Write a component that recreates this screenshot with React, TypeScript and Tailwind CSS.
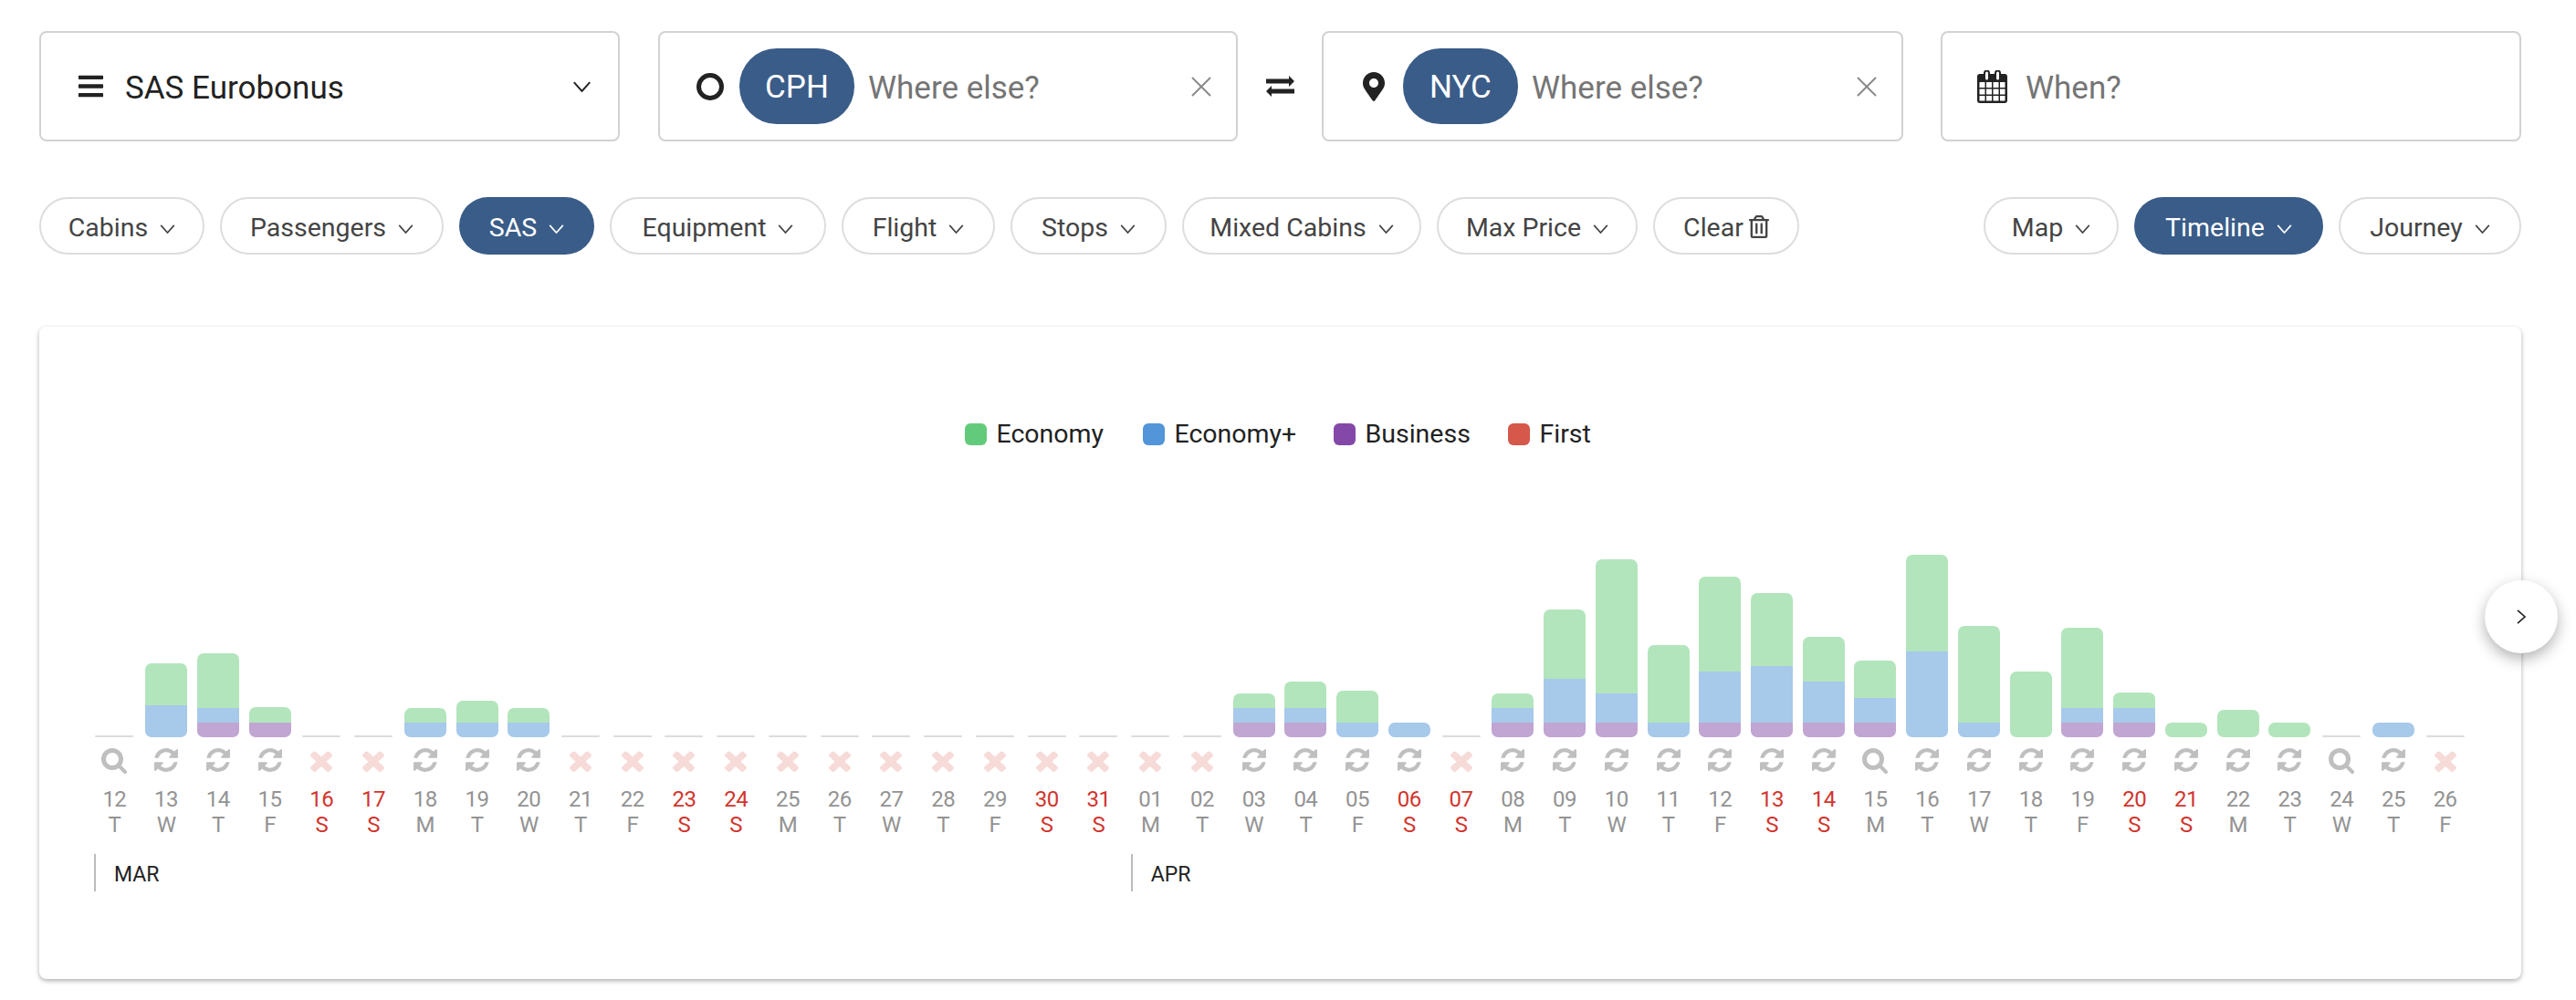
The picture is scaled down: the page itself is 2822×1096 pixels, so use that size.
import { FaBars, FaMapMarkerAlt, FaRegTrashAlt } from "react-icons/fa";

const Chevron = ({ className = "" }: { className?: string }) => (
  <svg viewBox="0 0 18 11" className={"w-[17px] h-[10px] shrink-0 " + className} fill="none" stroke="currentColor" strokeWidth="1.8">
    <polyline points="1,1 9,10 17,1" />
  </svg>
);

const Cross = () => (
  <svg viewBox="0 0 22 22" className="w-[22px] h-[22px] text-[#8a8a8a] shrink-0" fill="none" stroke="currentColor" strokeWidth="2">
    <line x1="1" y1="1" x2="21" y2="21" />
    <line x1="21" y1="1" x2="1" y2="21" />
  </svg>
);

const Swap = () => (
  <svg viewBox="0 0 31 23" className="w-[31px] h-[23px] text-[#222]" fill="currentColor">
    <path d="M0 3.5h25V0l6 6-6 6V8.5H0z" />
    <path d="M31 14.5H6V11l-6 6 6 6v-3.5h25z" />
  </svg>
);

const CalendarIcon = () => (
  <svg viewBox="0 0 33 36" className="w-[33px] h-[36px] text-[#222]" fill="currentColor">
    <path
      fillRule="evenodd"
      d="M3 4h4V3a3.5 3.5 0 0 1 7 0v1h5V3a3.5 3.5 0 0 1 7 0v1h4a3 3 0 0 1 3 3v26a3 3 0 0 1-3 3H3a3 3 0 0 1-3-3V7a3 3 0 0 1 3-3zM9 3v6a1.5 1.5 0 0 0 3 0V3a1.5 1.5 0 0 0-3 0zm12 0v6a1.5 1.5 0 0 0 3 0V3a1.5 1.5 0 0 0-3 0zM2.500 13v6h6v-6zm7.500 0v6h6v-6zm7.500 0v6h6v-6zm7.500 0v6h5.500v-6zM2.500 20.500v6h6v-6zm7.500 0v6h6v-6zm7.500 0v6h6v-6zm7.500 0v6h5.500v-6zM2.500 28v5.500h6V28zm7.500 0v5.500h6V28zm7.500 0v5.500h6V28zm7.500 0v5.500h5.500V28z"
    />
  </svg>
);

const SyncIcon = () => (
  <svg viewBox="0 128 1536 1536" className="w-[26px] h-[26px] text-[#bfbfbf]" fill="currentColor">
    <path d="M1511 1056q0 5-1 7-64 268-268 434.5t-478 166.5q-146 0-282.5-55t-243.5-157l-129 129q-19 19-45 19t-45-19-19-45v-448q0-26 19-45t45-19h448q26 0 45 19t19 45-19 45l-137 137q71 66 161 102t187 36q134 0 250-65t186-179q11-17 53-117 8-23 30-23h192q13 0 22.5 9.5t9.5 22.5zm25-800v448q0 26-19 45t-45 19h-448q-26 0-45-19t-19-45 19-45l138-138q-148-137-349-137-134 0-250 65t-186 179q-11 17-53 117-8 23-30 23h-199q-13 0-22.5-9.5t-9.5-22.5v-7q65-268 270-434.5t480-166.5q146 0 284 55.5t245 156.5l130-129q19-19 45-19t45 19 19 45z" />
  </svg>
);

const CrossIcon = () => (
  <svg viewBox="302 238 1188 1316" className="w-[24px] h-[25px] mt-[1px] text-[#f7dbd8]" fill="currentColor" preserveAspectRatio="none">
    <path d="M1490 1322q0 40-28 68l-136 136q-28 28-68 28t-68-28l-294-294-294 294q-28 28-68 28t-68-28l-136-136q-28-28-28-68t28-68l294-294-294-294q-28-28-28-68t28-68l136-136q28-28 68-28t68 28l294 294 294-294q28-28 68-28t68 28l136 136q28 28 28 68t-28 68l-294 294 294 294q28 28 28 68z" />
  </svg>
);

const SearchIcon = () => (
  <svg viewBox="0 0 28 28" className="w-[28px] h-[28px] shrink-0 text-[#bfbfbf]" fill="none" stroke="currentColor" strokeWidth="5">
    <circle cx="12" cy="12" r="9.5" />
    <line x1="18.500" y1="18.500" x2="26" y2="26" strokeLinecap="round" strokeWidth="4" />
  </svg>
);

const Chip = ({ label, width, active }: { label: string; width: string; active?: boolean }) => (
  <div
    className={
      "h-[63px] rounded-full flex items-center justify-center gap-[13px] text-[28.5px] " +
      width +
      (active ? " bg-[#3a5c88] text-white" : " border-2 border-[#dddde0] text-[#444]")
    }
  >
    <span className="mt-[6px]">{label}</span>
    <Chevron className="mt-[6px]" />
  </div>
);

const Airport = ({ code, icon, width }: { code: string; icon: React.ReactNode; width: string }) => (
  <div className={"h-[121px] border-2 border-[#d2d2d2] rounded-lg flex items-center pl-[39px] pr-[27px] " + width}>
    <div className="w-[31px] flex justify-center">{icon}</div>
    <div className="ml-[17px] w-[126px] h-[83px] rounded-[41px] bg-[#3a5c88] text-white text-[35px] flex items-center justify-center">
      <span className="mt-[3px]">{code}</span>
    </div>
    <div className="ml-[15px] mt-[6px] flex-1 text-[35px] text-[#757575]">Where else?</div>
    <Cross />
  </div>
);

type Day = {
  d: string;
  w: string;
  s: "search" | "sync" | "x";
  g?: number;
  b?: number;
  p?: number;
  red?: boolean;
};

const days: Day[] = [
  { d: "12", w: "T", s: "search" },
  { d: "13", w: "W", s: "sync", g: 46, b: 35 },
  { d: "14", w: "T", s: "sync", g: 60, b: 16, p: 16 },
  { d: "15", w: "F", s: "sync", g: 17, p: 16 },
  { d: "16", w: "S", s: "x", red: true },
  { d: "17", w: "S", s: "x", red: true },
  { d: "18", w: "M", s: "sync", g: 16, b: 16 },
  { d: "19", w: "T", s: "sync", g: 24, b: 16 },
  { d: "20", w: "W", s: "sync", g: 16, b: 16 },
  { d: "21", w: "T", s: "x" },
  { d: "22", w: "F", s: "x" },
  { d: "23", w: "S", s: "x", red: true },
  { d: "24", w: "S", s: "x", red: true },
  { d: "25", w: "M", s: "x" },
  { d: "26", w: "T", s: "x" },
  { d: "27", w: "W", s: "x" },
  { d: "28", w: "T", s: "x" },
  { d: "29", w: "F", s: "x" },
  { d: "30", w: "S", s: "x", red: true },
  { d: "31", w: "S", s: "x", red: true },
  { d: "01", w: "M", s: "x" },
  { d: "02", w: "T", s: "x" },
  { d: "03", w: "W", s: "sync", g: 16, b: 16, p: 16 },
  { d: "04", w: "T", s: "sync", g: 29, b: 16, p: 16 },
  { d: "05", w: "F", s: "sync", g: 35, b: 16 },
  { d: "06", w: "S", s: "sync", b: 16, red: true },
  { d: "07", w: "S", s: "x", red: true },
  { d: "08", w: "M", s: "sync", g: 16, b: 16, p: 16 },
  { d: "09", w: "T", s: "sync", g: 76, b: 48, p: 16 },
  { d: "10", w: "W", s: "sync", g: 147, b: 32, p: 16 },
  { d: "11", w: "T", s: "sync", g: 85, b: 16 },
  { d: "12", w: "F", s: "sync", g: 104, b: 56, p: 16 },
  { d: "13", w: "S", s: "sync", g: 80, b: 62, p: 16, red: true },
  { d: "14", w: "S", s: "sync", g: 49, b: 45, p: 16, red: true },
  { d: "15", w: "M", s: "search", g: 41, b: 27, p: 16 },
  { d: "16", w: "T", s: "sync", g: 106, b: 94 },
  { d: "17", w: "W", s: "sync", g: 106, b: 16 },
  { d: "18", w: "T", s: "sync", g: 72 },
  { d: "19", w: "F", s: "sync", g: 88, b: 16, p: 16 },
  { d: "20", w: "S", s: "sync", g: 17, b: 16, p: 16, red: true },
  { d: "21", w: "S", s: "sync", g: 16, red: true },
  { d: "22", w: "M", s: "sync", g: 30 },
  { d: "23", w: "T", s: "sync", g: 16 },
  { d: "24", w: "W", s: "search" },
  { d: "25", w: "T", s: "sync", b: 16 },
  { d: "26", w: "F", s: "x" },
];

const legend = [
  { label: "Economy", color: "bg-[#62cb7b]", width: "w-[195px]" },
  { label: "Economy+", color: "bg-[#5295d8]", width: "w-[209px]" },
  { label: "Business", color: "bg-[#8448a8]", width: "w-[191px]" },
  { label: "First", color: "bg-[#d5584a]", width: "w-[93px]" },
];

const DayColumn = ({ day }: { day: Day }) => {
  const empty = !day.g && !day.b && !day.p;
  return (
    <div className="flex flex-col items-center">
      <div className="h-[322px] w-full flex flex-col justify-end items-center">
        {empty ? (
          <div className="w-[42px] h-[2px] bg-[#dcdcdc] rounded-full" />
        ) : (
          <div className="w-[46px] rounded-[7px] overflow-hidden flex flex-col">
            {day.g ? <div className="bg-[#b3e5bc]" style={{ height: day.g }} /> : null}
            {day.b ? <div className="bg-[#a7c9ea]" style={{ height: day.b }} /> : null}
            {day.p ? <div className="bg-[#c1a5d2]" style={{ height: day.p }} /> : null}
          </div>
        )}
      </div>
      <div className="mt-[12px] h-[26px] flex items-start justify-center">
        {day.s === "sync" && <SyncIcon />}
        {day.s === "search" && <SearchIcon />}
        {day.s === "x" && <CrossIcon />}
      </div>
      <div className={"mt-[16px] text-[24px] leading-[28px] tracking-[-0.5px] text-center " + (day.red ? "text-[#d1352e]" : "text-[#939393]")}>
        <div>{day.d}</div>
        <div>{day.w}</div>
      </div>
    </div>
  );
};

export default function App() {
  return (
    <div className="w-[2822px] h-[1096px] bg-white pl-[43px] pr-[60px] pt-[34px] overflow-hidden font-['Roboto',sans-serif] text-[#222]">
      <div className="flex items-center">
        <div className="w-[636px] h-[121px] border-2 border-[#d2d2d2] rounded-lg flex items-center pl-[39px] pr-[29px]">
          <FaBars className="w-[31px] h-[31px] text-[#222]" />
          <div className="ml-[22px] mt-[6px] flex-1 text-[35px]">SAS Eurobonus</div>
          <Chevron className="w-[21px] h-[12px]" />
        </div>
        <div className="ml-[42px]">
          <Airport width="w-[635px]" code="CPH" icon={<div className="w-[30px] h-[30px] rounded-full border-[5px] border-[#222]" />} />
        </div>
        <div className="w-[92px] flex justify-center">
          <Swap />
        </div>
        <Airport width="w-[637px]" code="NYC" icon={<FaMapMarkerAlt className="w-[24px] h-[32px] text-[#222]" />} />
        <div className="ml-[41px] w-[636px] h-[121px] border-2 border-[#d2d2d2] rounded-lg flex items-center pl-[38px]">
          <CalendarIcon />
          <div className="ml-[20px] mt-[6px] text-[35px] text-[#757575]">When?</div>
        </div>
      </div>

      <div className="mt-[61px] flex justify-between">
        <div className="flex gap-[17px]">
          <Chip label="Cabins" width="w-[181px]" />
          <Chip label="Passengers" width="w-[245px]" />
          <Chip label="SAS" width="w-[148px]" active />
          <Chip label="Equipment" width="w-[237px]" />
          <Chip label="Flight" width="w-[168px]" />
          <Chip label="Stops" width="w-[171px]" />
          <Chip label="Mixed Cabins" width="w-[262px]" />
          <Chip label="Max Price" width="w-[220px]" />
          <div className="h-[63px] w-[160px] rounded-full border-2 border-[#dddde0] text-[#444] text-[28.5px] flex items-center justify-center gap-[6px]">
            <span className="mt-[6px]">Clear</span>
            <FaRegTrashAlt className="w-[22px] h-[25px] mt-[2px]" />
          </div>
        </div>
        <div className="flex gap-[17px]">
          <Chip label="Map" width="w-[148px]" />
          <Chip label="Timeline" width="w-[207px]" active />
          <Chip label="Journey" width="w-[200px]" />
        </div>
      </div>

      <div className="relative mt-[79px] w-[2719px] h-[715px] rounded-lg bg-white shadow-[0_2px_5px_rgba(0,0,0,0.32)] pl-[54px] pt-[104px]">
        <div className="flex justify-center pr-[58px]">
          <div className="flex mt-[2px] -mb-[2px]">
            {legend.map((item) => (
              <div key={item.label} className={"flex items-center h-[24px] text-[28.5px] " + item.width}>
                <div className={"w-[24px] h-[24px] rounded-[6px] " + item.color} />
                <span className="ml-[11px]">{item.label}</span>
              </div>
            ))}
          </div>
        </div>

        <div className="grid grid-cols-[repeat(46,1fr)] w-[2610px]">
          {days.map((day, i) => (
            <DayColumn key={i} day={day} />
          ))}
        </div>

        <div className="mt-[18px] grid grid-cols-[repeat(46,1fr)] w-[2610px]">
          <div className="col-span-20 pl-[6px]">
            <div className="h-[41px] border-l-2 border-[#bbb] pl-[20px] pt-[5px] flex items-center text-[23px]">MAR</div>
          </div>
          <div className="col-span-26 pl-[7px]">
            <div className="h-[41px] border-l-2 border-[#bbb] pl-[20px] pt-[5px] flex items-center text-[23px]">APR</div>
          </div>
        </div>

        <button className="absolute right-[-40px] top-[278px] w-[80px] h-[80px] rounded-full bg-white shadow-[0_6px_16px_rgba(0,0,0,0.3)] flex items-center justify-center text-[#222]">
          <svg viewBox="0 0 11 18" className="w-[10px] h-[16px]" fill="none" stroke="currentColor" strokeWidth="1.8">
            <polyline points="1,1 10,9 1,17" />
          </svg>
        </button>
      </div>
    </div>
  );
}
